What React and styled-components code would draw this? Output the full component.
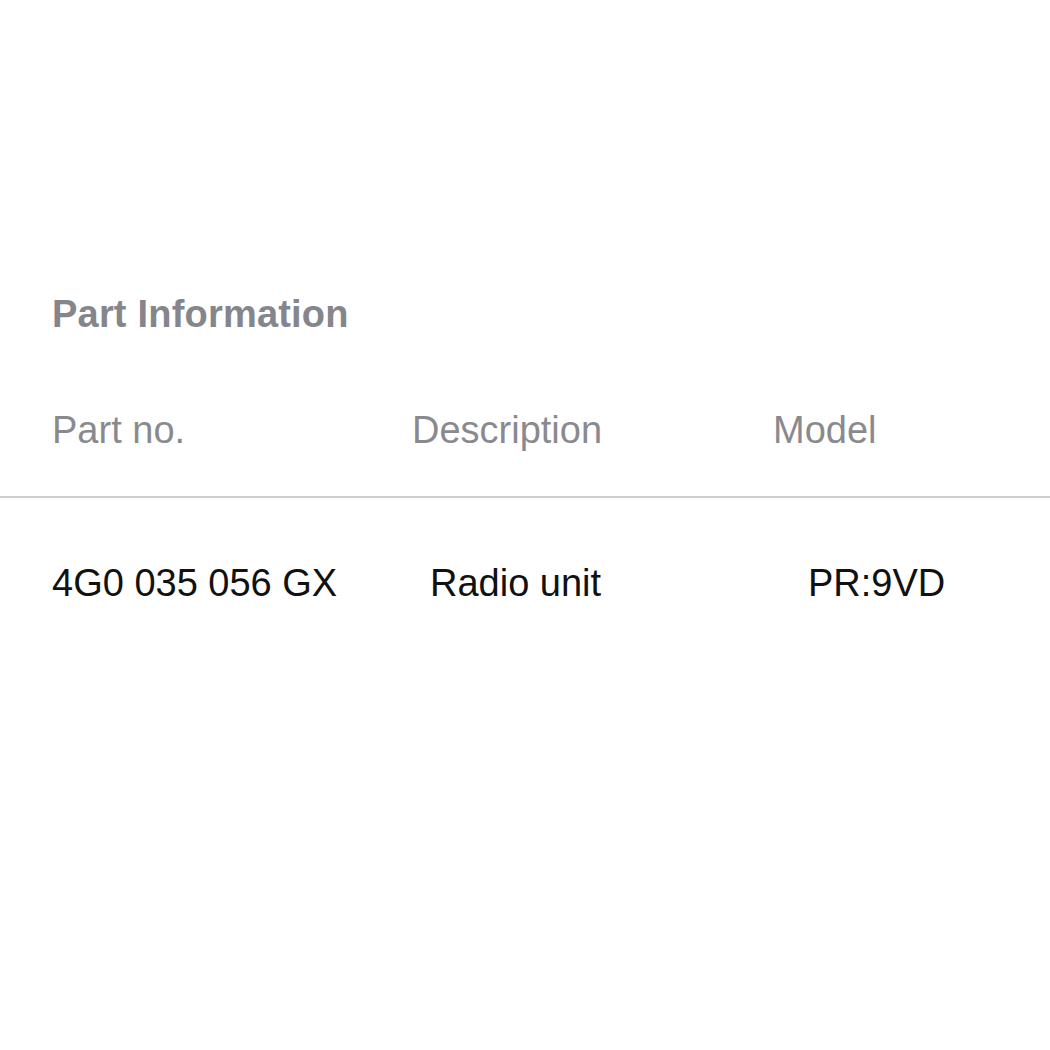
import React from "react";
import styled, { createGlobalStyle } from "styled-components";

const GlobalStyle = createGlobalStyle`
  html, body {
    margin: 0;
    padding: 0;
    background: #fff;
    font-family: "Liberation Sans", Arial, sans-serif;
  }
`;

const columns = [
  { label: "Part no.", value: "4G0 035 056 GX", shift: 0 },
  { label: "Description", value: "Radio unit", shift: 18 },
  { label: "Model", value: "PR:9VD", shift: 35 },
];

function App() {
  return (
    <Wrapper>
      <GlobalStyle />
      <Title>Part Information</Title>
      <HeadRow>
        {columns.map((c) => (
          <HeadCell key={c.label}>{c.label}</HeadCell>
        ))}
      </HeadRow>
      <DataRow>
        {columns.map((c) => (
          <DataCell key={c.label} $shift={c.shift}>
            {c.value}
          </DataCell>
        ))}
      </DataRow>
    </Wrapper>
  );
}

const Wrapper = styled.section`
  width: 1050px;
  height: 1050px;
  padding-top: 291px;
  box-sizing: border-box;
`;

const Title = styled.h2`
  margin: 0 0 70px;
  padding-left: 52px;
  font-size: 38px;
  line-height: 46px;
  font-weight: 700;
  letter-spacing: 0.2px;
  color: #85858c;
`;

const Row = styled.div`
  display: grid;
  grid-template-columns: 360px 361px 1fr;
  padding-left: 52px;
  font-size: 38px;
  line-height: 46px;
`;

const HeadRow = styled(Row)`
  padding-bottom: 43px;
  border-bottom: 2px solid #cfcfcf;
  color: #8a8a8e;
`;

const HeadCell = styled.div``;

const DataRow = styled(Row)`
  padding-top: 62px;
  color: #111;
`;

const DataCell = styled.div`
  padding-left: ${(p) => p.$shift}px;
`;

export default App;
